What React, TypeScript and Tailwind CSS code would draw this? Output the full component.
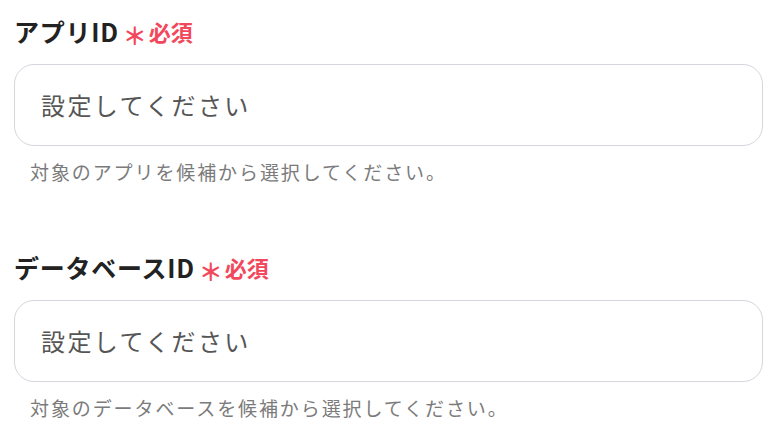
import React from "react";

const font = { fontFamily: '"Noto Sans CJK JP", "Noto Sans", sans-serif' };

function Field({ label, help }: { label: string; help: string }) {
  return (
    <div className="flex flex-col">
      <div className="flex items-center h-[24px] mt-[19px]">
        <span className="text-[25px] font-bold text-[#222222] tracking-[0.03em] leading-none">{label}</span>
        <span className="ml-[4px] text-[24px] font-bold text-[#f2485c] leading-none mt-[8px]">＊</span>
        <span className="ml-[2px] text-[22px] font-bold text-[#f2485c] leading-none">必須</span>
      </div>
      <div className="mt-[21px] h-[82px] w-[749px] rounded-[20px] border border-[#d5d6de] bg-white flex items-center pl-[26px]">
        <span className="text-[24px] text-[#555555] tracking-[0.1em] leading-none">設定してください</span>
      </div>
      <div className="mt-[16px] pl-[16px] text-[19px] text-[#7b7b7b] tracking-[0.1em] leading-none">{help}</div>
    </div>
  );
}

export default function App() {
  return (
    <div className="w-[782px] h-[432px] bg-white overflow-hidden pl-[14px]" style={font}>
      <Field label="アプリID" help="対象のアプリを候補から選択してください。" />
      <div className="h-[55px]" />
      <Field label="データベースID" help="対象のデータベースを候補から選択してください。" />
    </div>
  );
}
